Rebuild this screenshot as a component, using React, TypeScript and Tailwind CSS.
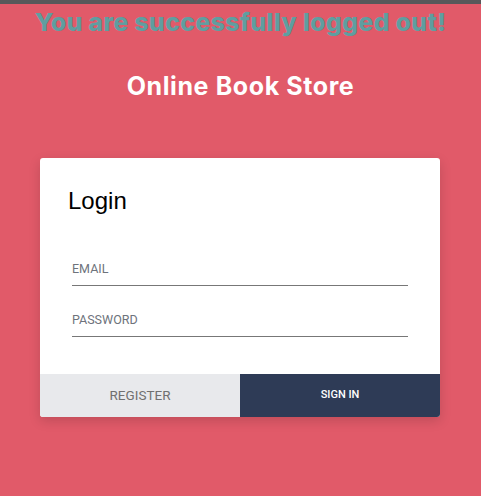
export default function App() {
  return (
    <main className="min-h-[496px] bg-[#e15a69] font-['Inter',sans-serif]">
      <div className="h-[4px] bg-[#58585a]" />
      <h1 className="pt-[3px] text-center text-[25px] font-extrabold leading-[30px] tracking-[0.25px] text-[#5f9ea0]">
        You are successfully logged out!
      </h1>
      <h2 className="mt-[34px] text-center text-[25px] font-bold leading-[30px] tracking-[0.6px] text-white">Online Book Store</h2>
      <div className="mx-[40px] mt-[57px] w-[400px] overflow-hidden rounded-[3px] bg-white shadow-[0_4px_12px_rgba(0,0,0,0.15)]">
        <div className="px-[28px] pb-[37px] pt-[28px]">
          <h3 className="font-['Liberation_Sans',sans-serif] text-[24px] leading-[30px] text-black">Login</h3>
          <div className="mt-[45px] px-[4px] font-['Roboto',sans-serif]">
            <div className="border-b border-[#777] pb-[8px] text-[12.5px] leading-[16px] text-[#6e737c]">EMAIL</div>
            <div className="mt-[26px] border-b border-[#777] pb-[8px] text-[12.5px] leading-[16px] text-[#6e737c]">PASSWORD</div>
          </div>
        </div>
        <div className="grid h-[43px] grid-cols-2 font-['Roboto',sans-serif]">
          <button className="bg-[#e8e9ec] text-[13.5px] text-[#707070]">REGISTER</button>
          <button className="bg-[#2e3b56] text-[11px] font-medium text-white">SIGN IN</button>
        </div>
      </div>
    </main>
  );
}
